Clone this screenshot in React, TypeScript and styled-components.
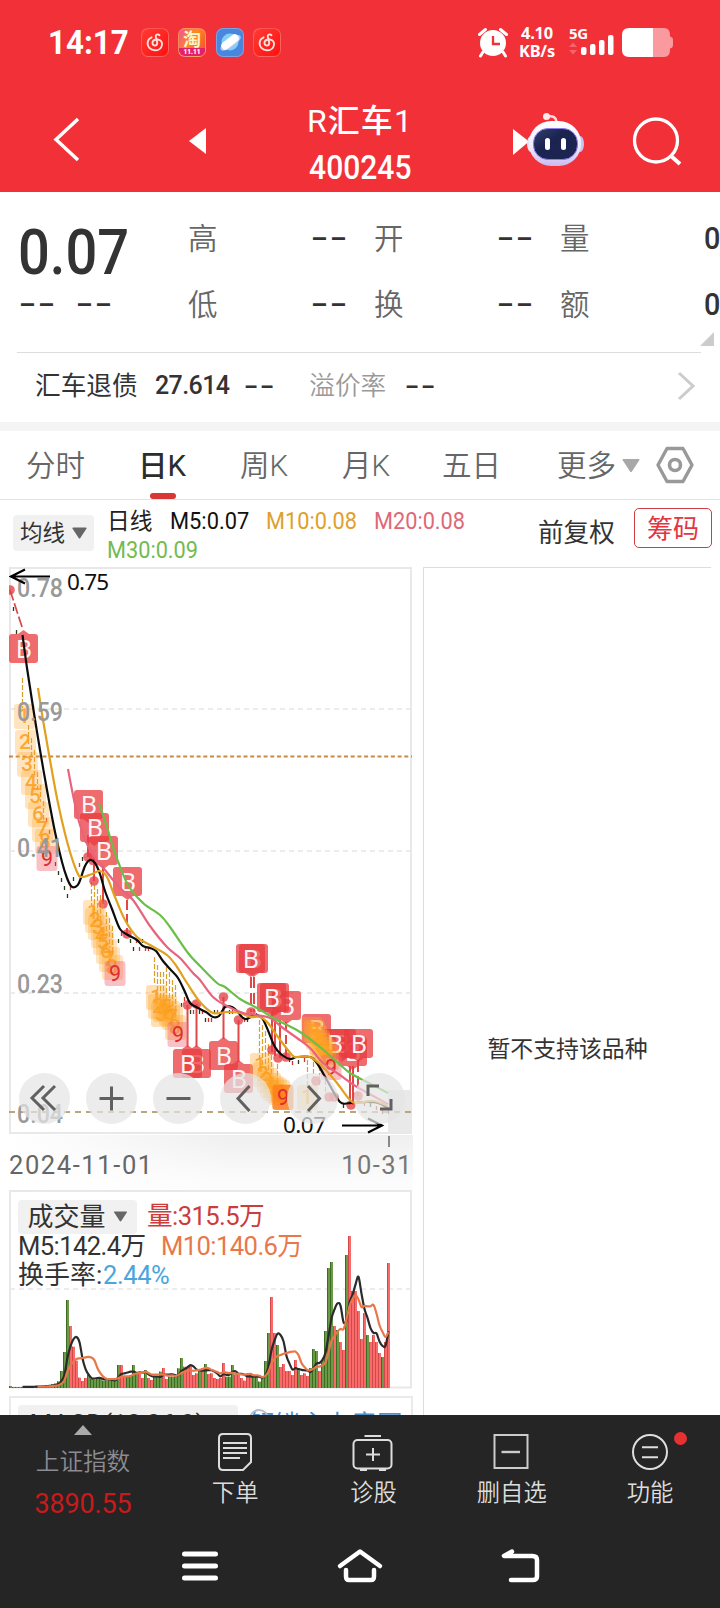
import React from 'react';
import styled, { createGlobalStyle } from 'styled-components';

const Global = createGlobalStyle`
  *, *::before, *::after { box-sizing: border-box; }
  body { margin: 0; background: #fff; font-family: Roboto, "Noto Sans CJK SC", sans-serif; color: #333; }
  svg { display: block; flex: none; }
`;

const Screen = styled.div`
  width: 720px; height: 1608px; overflow: hidden;
  display: flex; flex-direction: column; background: #fff;
`;

/* ---------- shared text ---------- */
const Label = styled.span<{ $size: number; $color?: string; $weight?: number; $ls?: number; $w?: number; $sx?: number }>`
  display: block; flex: none; white-space: nowrap;
  font-size: ${p => p.$size}px;
  line-height: 1.2;
  color: ${p => p.$color ?? '#333'};
  font-weight: ${p => p.$weight ?? 400};
  letter-spacing: ${p => p.$ls ?? 0}px;
  ${p => p.$w ? `width: ${p.$w}px;` : ''}
  ${p => p.$sx ? `transform: scaleX(${p.$sx}); transform-origin: left center;` : ''}
`;
const DashText = styled.span<{ $size?: number }>`
  display: block; flex: none; width: ${p => (p.$size ?? 30) * 1.25}px;
  font-size: ${p => p.$size ?? 30}px; line-height: 1; font-weight: 500; color: #333;
  letter-spacing: 1.1px; transform: scaleX(1.68); transform-origin: left center;
`;

/* ---------- header ---------- */
const Header = styled.header`
  height: 192px; flex: none; background: #f23038; color: #fff; display: flex; flex-direction: column;
`;
const StatusBar = styled.div`
  height: 84px; padding: 0 47px 0 48px; display: flex; align-items: center; justify-content: space-between;
`;
const StatusGroup = styled.div<{ $gap: number }>`display: flex; align-items: center; gap: ${p => p.$gap}px;`;
const Clock = styled.div`
  width: 83px; font-size: 34px; line-height: 42px; font-weight: 700; white-space: nowrap;
  transform: scaleX(.92); transform-origin: left center;
`;
const AppTile = styled.span<{ $bg: string }>`
  width: 28px; height: 29px; border-radius: 7px; background: ${p => p.$bg};
  border: 1px solid rgba(255,255,255,.25); display: flex; align-items: center; justify-content: center; overflow: hidden;
`;
const TaoTile = styled(AppTile)`flex-direction: column;`;
const TaoGlyph = styled.span`font-size: 18px; line-height: 19px; font-weight: 700; color: #fff3c8; font-family: "Noto Sans CJK SC", sans-serif;`;
const TaoDate = styled.span`font-size: 6.5px; line-height: 8px; font-weight: 900; color: #fff; width: 100%; text-align: center; background: #e3206c;`;
const Rate = styled.div`font-family: "Noto Sans", sans-serif; font-size: 16.4px; font-weight: 700; line-height: 18px; text-align: center; letter-spacing: -.2px;`;
const TitleBar = styled.div`
  height: 108px; display: grid; grid-template-columns: 180px 120px 120px 190px 110px;
`;
const HeadCell = styled.div<{ $pl?: number; $pt?: number }>`padding: ${p => p.$pt ?? 0}px 0 0 ${p => p.$pl ?? 0}px; display: flex;`;
const TitleBlock = styled.div`display: flex; flex-direction: column; align-items: center; padding-top: 17px;`;
const StockName = styled.div`font-size: 32px; line-height: 40px; font-weight: 450; letter-spacing: 1.1px; white-space: nowrap;`;
const StockCode = styled.div`font-size: 33px; line-height: 40px; margin-top: 7px; font-weight: 500; transform: scaleX(.91);`;

/* ---------- quote ---------- */
const Quote = styled.section`height: 160px; flex: none; display: flex; position: relative; padding-left: 20px;`;
const PriceCol = styled.div`width: 168px; flex: none; padding-top: 24px;`;
const Price = styled.div`font-size: 63px; line-height: 73px; font-weight: 500; transform: scaleX(.89); transform-origin: left; margin-left: -2px;`;
const ChangeRow = styled.div`display: flex; gap: 19px; margin-left: -1px;`;
const StatGrid = styled.div`flex: none; display: grid; grid-template-columns: 186px 186px 160px; grid-template-rows: 66px 66px; padding-top: 13px;`;
const StatCell = styled.div`display: flex; align-items: center; width: 160px; justify-content: space-between;`;
const StatName = styled.div`font-size: 29.5px; line-height: 36px; padding-bottom: 5px; color: #666; font-weight: 350; font-family: "Noto Sans CJK SC", sans-serif;`;
const Corner = styled.i`position: absolute; right: 6px; bottom: 6px; border-left: 14px solid transparent; border-bottom: 14px solid #ccc;`;
const BondRow = styled.section`
  height: 70px; flex: none; margin: 0 19px 0 17px; border-top: 1px solid #ddd;
  padding: 0 6px 3px 18px; display: flex; align-items: center;
`;
const Grow = styled.span`flex: 1;`;
const Divider = styled.div`height: 9px; flex: none; background: #f4f4f4;`;

/* ---------- tabs ---------- */
const Tabs = styled.nav`height: 69px; flex: none; display: flex; align-items: center; padding-left: 26px; border-bottom: 1px solid #e4e4e4;`;
const Tab = styled.div<{ $w: number; $active?: boolean }>`
  width: ${p => p.$w}px; flex: none; font-size: 29.5px; line-height: 71px; height: 69px; white-space: nowrap;
  color: ${p => (p.$active ? '#2c2c2c' : '#666')}; font-weight: ${p => (p.$active ? 450 : 350)};
  position: relative;
  &::after { content: ''; display: ${p => (p.$active ? 'block' : 'none')};
    position: absolute; left: 12px; bottom: 1px; width: 26px; height: 6px; border-radius: 3px; background: #d93636; }
`;

/* ---------- legend ---------- */
const LegendBar = styled.div`height: 67px; flex: none; display: flex; padding-left: 13px;`;
const Picker = styled.div<{ $w: number; $h: number; $size: number }>`
  width: ${p => p.$w}px; height: ${p => p.$h}px; flex: none; background: #f1f1f1; border-radius: 4px;
  display: flex; align-items: center; justify-content: center; gap: 7px; font-size: ${p => p.$size}px; line-height: 1; color: #333; white-space: nowrap;
`;
const PickerSlot = styled.div`width: 94px; padding-top: 15px;`;
const LegendLines = styled.div`width: 425px; padding-top: 7px; display: flex; flex-direction: column;`;
const LegendLine = styled.div`display: flex; height: 29px; align-items: center;`;
const Adjust = styled.div`width: 95px; padding: 18px 0 0 6px;`;
const ChipButton = styled.div`
  width: 78px; height: 40px; margin: 8px 0 0 7px; border: 1px solid #cc3d44; border-radius: 5px; color: #e23641;
  font-size: 26px; line-height: 40px; text-align: center; white-space: nowrap;
`;

/* ---------- chart area ---------- */
const Body = styled.main`height: 848px; flex: none; overflow: hidden; display: flex; padding-left: 9px; gap: 10px;`;
const Charts = styled.div`width: 404px; flex: none; display: flex; flex-direction: column;`;
const ChipPanel = styled.aside`
  width: 288px; height: 860px; border-top: 1px solid #ddd; border-left: 1px solid #ddd; padding: 63px 0 0; display: flex; justify-content: center; align-items: flex-start;
`;
const Unsupported = styled.div`font-size: 22.9px; line-height: 30px; color: #333; margin-top: 404px; padding-right: 0;`;
const PriceBox = styled.div`position: relative; height: 568px; flex: none;`;
const ToolRow = styled.div`position: absolute; left: 10px; right: 8px; top: 506px; display: flex; justify-content: space-between;`;
const Tool = styled.span`width: 51px; height: 51px; border-radius: 50%; background: rgba(228,228,228,.72); display: flex; align-items: center; justify-content: center;`;
const DateAxis = styled.div`
  height: 55px; flex: none; display: flex; justify-content: space-between; align-items: center; padding: 5px 1px 0 0;
  background:
    linear-gradient(to right, #fff 0, rgba(255,255,255,0) 55%),
    linear-gradient(to bottom, #efefef, #fcfcfc 85%);
`;
const DateEnd = styled.div`
  font-size: 25.5px; line-height: 1.2; letter-spacing: 1.5px; color: #777; white-space: nowrap; position: relative; margin-right: -1px;
  &::before { content: ''; position: absolute; right: 23px; top: -14px; width: 2px; height: 11px; background: #888; }
`;
const VolumeBox = styled.div`position: relative; height: 199px; flex: none;`;
const VolumeText = styled.div`position: absolute; left: 9px; top: 9px; display: flex; flex-direction: column;`;
const VolLine = styled.div<{ $h: number; $gap: number }>`display: flex; align-items: center; gap: ${p => p.$gap}px; height: ${p => p.$h}px; padding-top: 1px;`;
const MacdBox = styled.div`height: 60px; margin-top: 7px; flex: none; border: 2px solid #eaeaea; display: flex; padding: 7px 0 0 7px; gap: 11px;`;
const Promo = styled.div`
  font-size: 25.6px; line-height: 32px; padding-top: 4px; color: #4f8ecb; white-space: nowrap; position: relative;
  &::before { content: ''; position: absolute; left: 0; top: 4px; width: 20px; height: 20px; border-radius: 50%; border: 2px solid #b9bfc8; }
`;

/* ---------- bottom ---------- */
const Bottom = styled.footer`height: 193px; flex: none; background: #252525; display: flex; flex-direction: column;`;
const Actions = styled.div`height: 107px; display: flex;`;
const IndexBox = styled.div`width: 166px; display: flex; flex-direction: column; align-items: center; padding-top: 10px;`;
const IndexName = styled.div`
  font-size: 23.6px; line-height: 34px; margin-top: 8px; color: #8c8c92; font-weight: 350; white-space: nowrap;
  font-family: "Noto Sans CJK SC", sans-serif;
`;
const IndexValue = styled.div`font-size: 27px; line-height: 34px; color: #c81a1a; margin-top: 10px; font-weight: 400; letter-spacing: -.2px;`;
const Action = styled.div`width: 138.3px; display: flex; flex-direction: column; align-items: center; padding-top: 15px; position: relative;`;
const ActionText = styled.div`font-size: 23.3px; line-height: 34px; color: #ddd; margin-top: 2px; font-weight: 350; white-space: nowrap; font-family: "Noto Sans CJK SC", sans-serif;`;
const RedDot = styled.i`position: absolute; width: 13px; height: 13px; border-radius: 50%; background: #e43232; left: 93px; top: 17px;`;
const SystemNav = styled.div`height: 86px; display: flex; justify-content: space-between; align-items: center; padding: 1px 180px 0 181px;`;

const Down = ({ w = 15, h = 12, color = '#666' }) => (
  <svg width={w} height={h} viewBox="0 0 15 12"><path d="M1 .5h13q1 .2.4 1.2L8.3 11q-.8 1-1.6 0L.6 1.7Q0 .7 1 .5Z" fill={color} /></svg>
);

const CloudTile = () => (
  <AppTile $bg="linear-gradient(135deg,#ff3b34,#ff1010)">
    <svg width="20" height="21" viewBox="0 0 20 21" fill="none" stroke="#ffe1dd" strokeWidth="1.9" strokeLinecap="round">
      <path d="M14.5 3.2c-1.6-1.5-4-.7-3.7 1.3l1.4 6c.4 2-1 3.1-2.4 3-1.700-.1-2.700-1.700-2.200-3.400.6-2 3-2.800 5.200-2.600 3 .3 4.600 2.700 4.200 5.300-.6 3.400-3.700 5.700-7.200 5.500C5.600 18.100 2.600 15.100 2.600 11.500c0-3 1.700-5.200 4-6.200" />
    </svg>
  </AppTile>
);

/* ---------- price chart data ---------- */
type Pt = [number, number];
const ma5: Pt[] = [[22.5,635],[27,668],[33,707],[40,750],[47,790],[55,832],[62,862],[67,878],[71,886],[75,887],[79,883],[85,866],[90,860],[95,863],[100,874],[105,891],[112,909],[120,929],[128,935],[137,940],[143,946],[150,948],[156,951],[163,961],[170,969],[178,978],[185,992],[190,1003],[198,1008],[206,1012],[213,1017],[219,1016],[225,1007],[232,1007],[237,1011],[245,1019],[255,1015],[262,1018],[267,1028],[275,1047],[282,1055],[290,1059],[297,1057],[310,1057],[317,1063],[328,1082],[340,1102],[350,1103],[367,1102],[378,1103],[388,1108]];
const ma10: Pt[] = [[38,688],[43,720],[50,760],[58,803],[68,845],[77,872],[82,877],[92,874],[100,871],[107,877],[115,897],[125,920],[137,937],[150,945],[167,955],[177,967],[187,983],[200,1002],[213,1013],[227,1012],[240,1013],[250,1017],[260,1017],[268,1023],[278,1037],[292,1055],[297,1057],[310,1057],[323,1067],[337,1083],[350,1100],[357,1103],[373,1101],[388,1106]];
const ma20: Pt[] = [[68,769],[73,795],[80,825],[90,850],[105,870],[120,888],[133,900],[150,926],[167,947],[180,958],[193,973],[200,980],[213,997],[225,1005],[243,1013],[255,1015],[270,1018],[283,1028],[297,1038],[310,1048],[323,1063],[340,1075],[357,1087],[388,1104]];
const ma30: Pt[] = [[99,803],[107,827],[115,853],[128,885],[143,903],[160,915],[170,927],[188,953],[200,966],[217,983],[225,987],[240,999],[257,1008],[277,1020],[300,1032],[320,1047],[337,1062],[350,1073],[367,1082],[388,1093]];

const smooth = (p: Pt[]) => {
  let d = `M${p[0][0]} ${p[0][1]}`;
  for (let i = 0; i < p.length - 1; i++) {
    const a = p[i - 1] ?? p[i], b = p[i], c = p[i + 1], e = p[i + 2] ?? c;
    d += `C${b[0] + (c[0] - a[0]) / 6} ${b[1] + (c[1] - a[1]) / 6} ${c[0] - (e[0] - b[0]) / 6} ${c[1] - (e[1] - b[1]) / 6} ${c[0]} ${c[1]}`;
  }
  return d;
};

/* x, y of the badge's corner, and whether its pointer is on the top edge */
const buys: [number, number, boolean?][] = [[9,634,true],[74,790],[80,813],[89,836],[113,867],[182,1049,true],[173,1049,true],[209,1041,true],[224,1064,true],[239,944],[236,944],[272,991],[260,983],[257,983],[302,1014],[338,1037],[327,1029],[320,1029],[344,1029]];
const dots: Pt[] = [[10,590],[88,857],[94,881],[103,904],[127,934],[187.5,1005],[196.5,1004],[223.5,997],[238.5,1020],[251,1012],[272,1050],[278,1058],[286,1057],[316,1081],[329,1097],[334,1097],[351,1105],[358,1096]];
const stems: [number, number, number, string?][] = [[94,857,881],[103,866,904],[127,900,934,'10 4'],[187.5,1005,1047],[196.5,1004,1047],[223.5,997,1039],[238.5,1020,1062],[251,977,1012,'11 5'],[254,977,1012,'11 5'],[272,1012,1052],[275,1018,1056],[280,1020,1058],[286,1022,1058,'9 4'],[350,1066,1105],[353,1066,1105],[358,1060,1096,'12 4'],[88,835,857]];

const tags: [string, number, number][] = [
  ['1',24,715],['2',25,741],['3',27,763],['4',31,781],['5',35,795],['6',38,813],['7',42,828],['8',45,840],
  ['1',93,911],['2',95,919],['3',98,926],['4',101,934],['5',103,941],['6',106,950],['7',109,958],['8',112,966],
  ['1',156,996],['2',158,1005],['3',161,1013],['4',163,1008],['5',166,1006],['6',169,1012],['7',172,1016],['8',175,1026],
  ['1',260,1064],['2',263,1073],['3',267,1079],['4',270,1084],['5',273,1087],['6',276,1089],['7',279,1091],['8',282,1095],
  ['1',311,1028],['2',314,1031],['3',316,1036],['4',319,1041],['5',320,1044],['6',322,1048],['7',325,1051],['8',328,1056],['1',307,1096],
];
const nines: [number, number][] = [[47,858],[115,973],[178,1034],[283,1097],[331,1067]];
const wicks: [number, number, number][] = [[22.5,678,708],[28.5,725,745],[31.5,738,760],[34.5,750,775],[37.5,772,790],[40.5,785,802],[43.5,801,822],[91.5,882,905],[94.5,885,912],[97.5,889,920],[100.5,895,925],[106.5,912,940],[109.5,918,948],[112.5,926,955],[154.5,957,985],[157.5,965,995],[160.5,972,1000],[163.5,972,1000],[166.5,967,1000],[169.5,972,1006],[172.5,980,1010],[175.5,985,1018],[259.5,1020,1060],[262.5,1025,1068],[265.5,1031,1070],[268.5,1044,1075],[271.5,1055,1080],[277.5,1064,1085],[307.5,1060,1088],[313.5,1062,1078],[319.5,1066,1086],[325.5,1080,1092]];
const ticks: [number, number, number][] = [[13.5,609,0],[16.5,632,0],[19.5,655,0],[46.5,820,1],[49.5,832,1],[55.5,864,0],[58.5,873,0],[61.5,880,0],[64.5,888,0],[67.5,896,0],[70.5,888,1],[73.5,879,0],[79.5,865,1],[82.5,859,0],[85.5,841,1],[118.5,941,0],[121.5,934,1],[130.5,941,0],[133.5,949,0],[136.5,941,1],[139.5,949,1],[142.5,941,0],[145.5,949,1],[148.5,949,1],[181.5,1005,0],[184.5,999,1],[190.5,1012,0],[193.5,1012,1],[199.5,1012,0],[202.5,1012,1],[205.5,1020,0],[208.5,1020,1],[211.5,1020,1],[214.5,1012,0],[217.5,1012,1],[229.5,1012,0],[232.5,1012,1],[244.5,1020,1],[247.5,1020,0],[256.5,1015,1],[289.5,1060,0],[292.5,1063,1],[298.5,1062,0],[304.5,1060,1],[343.5,1106,0],[364.5,1104,1],[370.5,1105,0],[376.5,1108,1],[382.5,1112,1],[388.5,1112,1]];

const AxisValue = ({ y, t }: { y: number; t: string }) => (
  <text x={17} y={y} fontSize={26} fill="#999" fontWeight={500} textLength={46} lengthAdjust="spacingAndGlyphs">{t}</text>
);

const PriceChart = () => (
  <svg width="404" height="580" viewBox="9 567 404 580" fontFamily="Roboto, sans-serif">
    <rect x="388" y="1090" width="24" height="44" fill="#e9e9e9" />
    <rect x="10" y="568" width="401" height="565" fill="none" stroke="#e8e8e8" strokeWidth="2" />
    <g stroke="#e6e6e6" strokeWidth="1.5" strokeDasharray="5 4">
      <path d="M10 709H411M10 851H411M10 993H411" />
    </g>
    <path d="M9 756.500H412" stroke="#c88a44" strokeWidth="2" strokeDasharray="4 2.700" />
    <path d="M9 1112H412" stroke="#b9a67c" strokeWidth="2" strokeDasharray="6 5" />
    {wicks.map(([x, a, b], i) => <path key={i} d={`M${x} ${a}V${b}`} stroke="#d9a02c" strokeWidth="1.2" strokeDasharray="5 2" />)}
    {ticks.map(([x, y, r], i) => <path key={i} d={`M${x} ${y - 2}v4`} stroke={r ? '#c33' : '#23401a'} strokeWidth="1.3" />)}
    <path d="M10 590L23 630" stroke="#d84848" strokeWidth="1.7" strokeDasharray="11 3" />
    {stems.map(([x, a, b, dash], i) => <path key={i} d={`M${x} ${a}V${b}`} stroke="#e04848" strokeWidth="2" strokeDasharray={dash} />)}
    {dots.map(([x, y], i) => <circle key={i} cx={x} cy={y} r="4.8" fill="#e53e44" fillOpacity=".78" />)}
    {buys.map(([x, y, up], i) => (
      <g key={i}>
        <path d={up ? `M${x + 9} ${y}l5.500-4 5.500 4Z` : `M${x + 9} ${y + 29}l5.500 4 5.500-4Z`} fill="#e83c40" fillOpacity=".76" />
        <rect x={x} y={y} width="29" height="29" rx="3" fill="#e83c40" fillOpacity=".76" />
        <text x={x + 15} y={y + 23.5} fontSize="25" fontFamily="Noto Sans, sans-serif" textAnchor="middle" fill="#fff" fillOpacity=".95">B</text>
      </g>
    ))}
    {tags.map(([t, x, y], i) => (
      <g key={i}>
        <rect x={x - 10} y={y - 11} width="21" height="25" rx="3" fill="#ffa52c" fillOpacity={i > 15 ? .36 : .3} />
        <text x={x} y={y + 8} fontSize="21" fontWeight="500" textAnchor="middle" fill="#fb9d1c" fillOpacity=".85">{t}</text>
      </g>
    ))}
    {nines.map(([x, y], i) => (
      <g key={i}>
        <rect x={x - 10.5} y={y - 12} width="21" height="25" rx="3" fill={i === 3 ? '#ff7a1a' : '#f06a74'} fillOpacity={i === 3 ? .8 : .42} />
        <text x={x} y={y + 8} fontSize="21.5" fontWeight="400" textAnchor="middle" fill="#de2f2b">9</text>
      </g>
    ))}
    <g fill="none" strokeWidth="2.2" strokeLinejoin="round">
      <path d={smooth(ma5)} stroke="#0c0c0c" />
      <path d={smooth(ma10)} stroke="#e2a01f" />
      <path d={smooth(ma20)} stroke="#e8647e" />
      <path d={smooth(ma30)} stroke="#6abf48" />
    </g>
    <AxisValue y={597} t="0.78" />
    <AxisValue y={721} t="0.59" />
    <AxisValue y={857} t="0.41" />
    <AxisValue y={993} t="0.23" />
    <AxisValue y={1123} t="0.04" />
    <g fill="none" stroke="#000" strokeWidth="2.2"><path d="M50 576.500H11M25 569.500L11 576.500L25 583.500" /><path d="M342 1125.500H382M368 1118.500L382 1125.500L368 1132.500" /></g>
    <text x="67" y="590" fontSize="22.500" fill="#111" fontFamily="Noto Sans, sans-serif" textLength="42">0.75</text>
    <text x="283" y="1133" fontSize="22.500" fill="#111" fontFamily="Noto Sans, sans-serif" textLength="43">0.07</text>
  </svg>
);

/* ---------- volume data: positive = up day, negative = down day ---------- */
const vol = [
  -6,-3,-3,-3,-3,-4,-4,-4,4,-5,-5,-6,-7,-9,-11,-13,-20,-51,-108,-264,186,124,82,31,21,30,-39,-27,-24,-30,-30,-22,-22,-24,-22,-26,
  -69,69,34,-34,-39,-69,-49,42,30,-54,30,24,-32,-32,-49,60,27,-34,-34,-36,-59,-90,64,62,69,39,44,-50,59,-72,42,44,30,27,30,75,-34,-34,
  -69,39,39,30,22,44,39,-34,-32,-19,-27,-81,-165,273,165,-129,63,72,51,51,39,84,-60,39,44,36,-60,-117,-111,51,-84,-171,-360,-378,186,-174,
  138,114,-399,456,291,291,231,147,224,-159,138,159,138,105,-93,138,375,
];
const volMA = (n: number): Pt[] => {
  const out: Pt[] = [];
  for (let i = n - 1; i < vol.length; i++) {
    let s = 0;
    for (let k = 0; k < n; k++) s += Math.abs(vol[i - k]);
    out.push([10.5 + i * 3, 1388 - s / n / 3]);
  }
  return out;
};

const VolumeChart = () => (
  <svg width="404" height="199" viewBox="9 1190 404 199">
    <rect x="10" y="1191" width="401" height="196.500" fill="#fff" stroke="#e8e8e8" strokeWidth="2" />
    <path d="M10 1289H411" stroke="#e6e6e6" strokeWidth="1.500" strokeDasharray="5 4" />
    {vol.map((v, i) => {
      const h = Math.abs(v) / 3;
      return (
        <g key={i}>
          <rect x={9 + i * 3} y={1388 - h} width="3" height={h} fill={v > 0 ? '#fb6a6a' : '#6a9a48'} />
          <rect x={9 + i * 3} y={1388 - h} width="1" height={h} fill={v > 0 ? '#d04a4a' : '#3d6b22'} />
        </g>
      );
    })}
    <g fill="none" strokeWidth="2.200" strokeLinejoin="round">
      <path d={smooth(volMA(5))} stroke="#2b2b2b" />
      <path d={smooth(volMA(10))} stroke="#e8784a" />
    </g>
  </svg>
);

const toolIcons = [
  'M25 13L13 25L25 37M36 13L24 25L36 37',
  'M25.500 13.500V37.500M13.500 25.500H37.500',
  'M13.500 25.500H37.500',
  'M29.500 13L18 25.500L29.500 38',
  'M21 13L32.500 25.500L21 38',
  'M14 23V13H25M37 26V36H26',
];

const Robot = () => (
  <svg width="74" height="56" viewBox="0 0 74 56">
    <defs>
      <linearGradient id="shell" x1="0" y1="0" x2="0" y2="1"><stop offset="0" stopColor="#fff" /><stop offset=".6" stopColor="#eeeafc" /><stop offset="1" stopColor="#cbb8ef" /></linearGradient>
      <linearGradient id="visor" x1="0" y1="0" x2="1" y2="1"><stop offset="0" stopColor="#35406e" /><stop offset=".4" stopColor="#1b2450" /><stop offset="1" stopColor="#1d2650" /></linearGradient>
    </defs>
    <path d="M2 18L18 30.500L2 44Z" fill="#fff" />
    <path d="M37 5.500c5-1 8 1 8.500 5" fill="none" stroke="#ffd9dc" strokeWidth="2.500" />
    <circle cx="35.500" cy="5.500" r="3.500" fill="#ffe9ea" />
    <ellipse cx="20" cy="33" rx="4" ry="8" fill="#dfe3fc" /><ellipse cx="69" cy="33" rx="4" ry="8" fill="#c9c2f2" />
    <rect x="18" y="10" width="52" height="45" rx="22" fill="url(#shell)" />
    <rect x="22.500" y="17.500" width="44" height="31" rx="14.500" fill="url(#visor)" stroke="#8d7de8" strokeWidth="1" />
    <rect x="34" y="27" width="5" height="12" rx="2.500" fill="#fff" /><rect x="50" y="27" width="5" height="12" rx="2.500" fill="#fff" />
  </svg>
);

const stats: [string, string][] = [['高', '--'], ['开', '--'], ['量', '0'], ['低', '--'], ['换', '--'], ['额', '0']];

export default function App() {
  return (
    <Screen>
      <Global />
      <Header>
        <StatusBar>
          <StatusGroup $gap={9.5}>
            <Clock>14:17</Clock>
            <CloudTile />
            <TaoTile $bg="linear-gradient(120deg,#f050a0,#ff8a1c 45%,#f34a30)"><TaoGlyph>淘</TaoGlyph><TaoDate>11.11</TaoDate></TaoTile>
            <AppTile $bg="#4a86de">
              <svg width="26" height="26" viewBox="0 0 26 26"><circle cx="13" cy="13" r="8.500" fill="#7fd0f4" /><ellipse cx="13" cy="14" rx="12" ry="4.500" fill="#a9c8f4" transform="rotate(-35 13 13)" /><rect x="3" y="9" width="20" height="8" rx="4" fill="#fff" transform="rotate(-38 13 13)" /></svg>
            </AppTile>
            <CloudTile />
          </StatusGroup>
          <StatusGroup $gap={0}>
            <svg width="30" height="31" viewBox="0 0 30 31">
              <circle cx="15" cy="16" r="13" fill="#fff" /><path d="M1.500 7.500L7.500 2.500M28.500 7.500L22.500 2.500M5 25L2.500 29M25 25L27.500 29" stroke="#fff" strokeWidth="3" strokeLinecap="round" />
              <path d="M15 9V17H22" stroke="#f23038" strokeWidth="2.300" fill="none" />
            </svg>
            <svg width="11" height="2" />
            <Rate>4.10<br />KB/s</Rate>
            <svg width="60" height="34" viewBox="0 0 60 34" fontFamily="Noto Sans, sans-serif">
              <text x="14" y="14" fontSize="15" fontWeight="700" fill="#fff" textLength="19">5G</text>
              <path d="M14 22l4-4.500 4 4.500ZM14 25l4 4.500 4-4.500Z" fill="#f8666c" />
              <g fill="#fff"><rect x="26" y="22" width="5.500" height="8" rx="2" /><rect x="35" y="19" width="5.500" height="11" rx="2" /><rect x="44" y="15" width="5.500" height="15" rx="2" /><rect x="53" y="10" width="5.500" height="20" rx="2" /></g>
            </svg>
            <svg width="7" height="2" />
            <svg width="51" height="29" viewBox="0 0 51 29">
              <path d="M30 0H42Q48 0 48 7V8.500Q51 9 51 12V17Q51 20 48 20.500V22Q48 29 42 29H30Z" fill="#fb9a9e" />
              <path d="M7 0H31V29H7Q0 29 0 22V7Q0 0 7 0Z" fill="#fff" />
            </svg>
          </StatusGroup>
        </StatusBar>
        <TitleBar>
          <HeadCell $pl={53} $pt={33}><svg width="27" height="46" viewBox="0 0 27 46"><path d="M25 2L3 22.500L25 43" stroke="#fff" strokeWidth="3.500" fill="none" /></svg></HeadCell>
          <HeadCell $pl={9} $pt={44}><svg width="18" height="26"><path d="M17 0V26L0 13Z" fill="#fff" /></svg></HeadCell>
          <TitleBlock><StockName>R汇车1</StockName><StockCode>400245</StockCode></TitleBlock>
          <HeadCell $pl={91} $pt={27}><Robot /></HeadCell>
          <HeadCell $pl={22} $pt={32}><svg width="50" height="50" viewBox="0 0 50 50" fill="none" stroke="#fff" strokeWidth="3.300"><circle cx="24" cy="24.500" r="21.500" /><path d="M39 40L48 48" strokeWidth="4" /></svg></HeadCell>
        </TitleBar>
      </Header>

      <Quote>
        <PriceCol>
          <Price>0.07</Price>
          <ChangeRow><DashText>--</DashText><DashText>--</DashText></ChangeRow>
        </PriceCol>
        <StatGrid>
          {stats.map(([k, v]) => (
            <StatCell key={k}>
              <StatName>{k}</StatName>
              {v === '0' ? <Label $size={32} $weight={500} $w={16} $sx={.9}>0</Label> : <DashText>--</DashText>}
            </StatCell>
          ))}
        </StatGrid>
        <Corner />
      </Quote>
      <BondRow>
        <Label $size={25.7} $w={120}>汇车退债</Label>
        <Label $size={25} $weight={500} $w={89} $ls={-.6}>27.614</Label>
        <DashText $size={25}>--</DashText>
        <svg width="34" height="2" />
        <Label $size={25.7} $color="#999" $weight={350} $w={96}>溢价率</Label>
        <DashText $size={25}>--</DashText>
        <Grow />
        <svg width="18" height="30" viewBox="0 0 18 30"><path d="M2 2L16 15L2 28" stroke="#ccc" strokeWidth="3" fill="none" /></svg>
      </BondRow>
      <Divider />

      <Tabs>
        <Tab $w={112}>分时</Tab>
        <Tab $w={102} $active>日K</Tab>
        <Tab $w={102}>周K</Tab>
        <Tab $w={100}>月K</Tab>
        <Tab $w={115}>五日</Tab>
        <Tab $w={65}>更多</Tab>
        <Down w={18} h={15} color="#a8a8a8" />
        <svg width="16" height="2" />
        <svg width="38" height="38" viewBox="0 0 38 38" fill="none" stroke="#999"><path d="M11 2.500H27L36 19L27 35.500H11L2 19Z" strokeWidth="3.400" strokeLinejoin="round" /><circle cx="19" cy="19" r="5.500" strokeWidth="3.600" /></svg>
      </Tabs>

      <LegendBar>
        <PickerSlot><Picker $w={81} $h={36} $size={22.5}>均线<Down /></Picker></PickerSlot>
        <LegendLines>
          <LegendLine>
            <Label $size={22.7} $w={63} $color="#222">日线</Label>
            <Label $size={24} $w={96} $color="#111" $weight={450} $sx={.91}>M5:0.07</Label>
            <Label $size={24} $w={108} $color="#dfa02c" $weight={450} $sx={.905}>M10:0.08</Label>
            <Label $size={24} $color="#dd6878" $weight={450} $sx={.905}>M20:0.08</Label>
          </LegendLine>
          <LegendLine><Label $size={24} $color="#72bb52" $weight={450} $sx={.905}>M30:0.09</Label></LegendLine>
        </LegendLines>
        <Adjust><Label $size={25.6}>前复权</Label></Adjust>
        <ChipButton>筹码</ChipButton>
      </LegendBar>

      <Body>
        <Charts>
          <PriceBox>
            <PriceChart />
            <ToolRow>
              {toolIcons.map((d, i) => (
                <Tool key={i}><svg width="51" height="51" viewBox="0 0 51 51"><path d={d} fill="none" stroke="#606060" strokeWidth="3" /></svg></Tool>
              ))}
            </ToolRow>
          </PriceBox>
          <DateAxis>
            <Label $size={25.5} $color="#666" $ls={1.6}>2024-11-01</Label>
            <DateEnd>10-31</DateEnd>
          </DateAxis>
          <VolumeBox>
            <VolumeChart />
            <VolumeText>
              <VolLine $h={34} $gap={10}>
                <Picker $w={119} $h={34} $size={26}>成交量<Down w={15} h={11} /></Picker>
                <Label $size={26} $color="#cb3c3c" $sx={.985} $ls={-.6}>量:315.5万</Label>
              </VolLine>
              <VolLine $h={26} $gap={13}>
                <Label $size={26} $ls={-.6} $sx={.985}>M5:142.4万</Label>
                <Label $size={26} $color="#e8784a" $ls={-.6} $sx={.985}>M10:140.6万</Label>
              </VolLine>
              <VolLine $h={32} $gap={1}>
                <Label $size={26}>换手率:</Label><Label $size={26} $color="#4aa5dc" $sx={.98} $ls={-.4}>2.44%</Label>
              </VolLine>
            </VolumeText>
          </VolumeBox>
          <MacdBox>
            <Picker $w={220} $h={38} $size={26}>MACD(12,26,9)<Down /></Picker>
            <Promo>解锁主力意图</Promo>
          </MacdBox>
        </Charts>
        <ChipPanel><Unsupported>暂不支持该品种</Unsupported></ChipPanel>
      </Body>

      <Bottom>
        <Actions>
          <IndexBox>
            <svg width="20" height="10"><path d="M10 0L19 10H1Z" fill="#aaa" /></svg>
            <IndexName>上证指数</IndexName>
            <IndexValue>3890.55</IndexValue>
          </IndexBox>
          <Action>
            <svg width="40" height="42" viewBox="0 0 40 42" fill="none" stroke="#ddd" strokeWidth="2"><path d="M8 4H32Q36 4 36 8V32L28 40H8Q4 40 4 36V8Q4 4 8 4Z" /><path d="M8 13H32M8 18H32M8 23H32M8 28H25" /></svg>
            <ActionText>下单</ActionText>
          </Action>
          <Action>
            <svg width="42" height="42" viewBox="0 0 42 42" fill="none" stroke="#ddd" strokeWidth="2"><rect x="1.500" y="10" width="38" height="28.500" rx="4" /><path d="M12.500 6H29M14 24.500H28M21 18V31M8 40H15M27 40H34" /></svg>
            <ActionText>诊股</ActionText>
          </Action>
          <Action>
            <svg width="40" height="42" viewBox="1.5 0 40 42" fill="none" stroke="#ccc" strokeWidth="2"><rect x="4" y="5" width="33" height="33" /><path d="M11 22H29.500" strokeWidth="2.400" /></svg>
            <ActionText>删自选</ActionText>
          </Action>
          <Action>
            <svg width="40" height="42" viewBox="0 0 40 42" fill="none" stroke="#ddd" strokeWidth="2"><circle cx="20" cy="22" r="17" /><path d="M12 17.200H28M12 27.200H28" /></svg>
            <ActionText>功能</ActionText>
            <RedDot />
          </Action>
        </Actions>
        <SystemNav>
          <svg width="38" height="34" viewBox="0 0 38 34" stroke="#fff" strokeWidth="5" strokeLinecap="round"><path d="M3.500 5H34.500M3.500 17H34.500M3.500 29H34.500" /></svg>
          <svg width="48" height="38" viewBox="0 0 48 38" fill="none" stroke="#fff" strokeWidth="4.500" strokeLinecap="round" strokeLinejoin="round"><path d="M4 19L24 4.500L44 19M10 23V29.500Q10 33 13 33H35Q38 33 38 29.500V23" /></svg>
          <svg width="40" height="38" viewBox="0 0 40 38" fill="none" stroke="#fff" strokeWidth="4.500" strokeLinecap="round" strokeLinejoin="round"><path d="M12 4.500L4 9H32.500Q37 9 37 13V29.500Q37 33 32.500 33H11" /></svg>
        </SystemNav>
      </Bottom>
    </Screen>
  );
}
